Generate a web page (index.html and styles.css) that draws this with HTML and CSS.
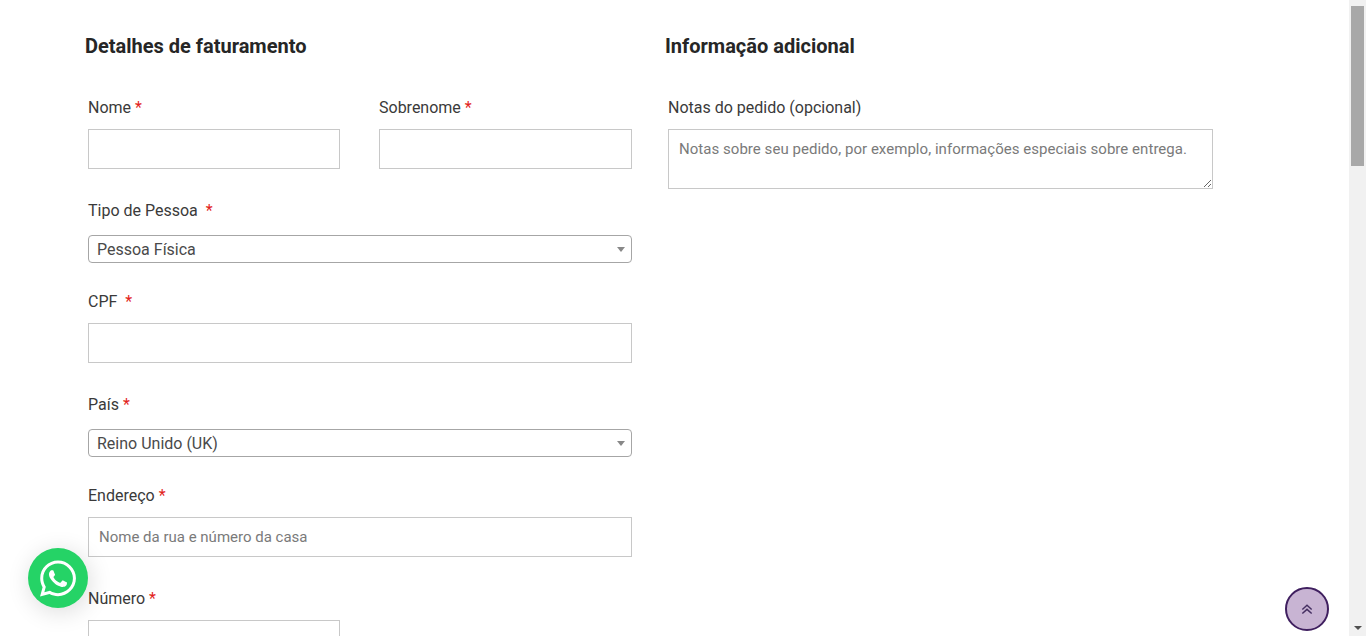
FILE: index.html
```html
<!DOCTYPE html>
<html lang="pt-BR">
<head>
<meta charset="utf-8">
<title>Finalizar compra</title>
<link rel="stylesheet" href="styles.css">
</head>
<body>
<div class="page">
  <main class="content">
    <section class="col col-billing">
      <h3 class="heading">Detalhes de faturamento</h3>
      <div class="fields">
        <div class="row-two">
          <div class="field">
            <label class="label">Nome <span class="req">*</span></label>
            <input class="input" type="text">
          </div>
          <div class="field">
            <label class="label">Sobrenome <span class="req">*</span></label>
            <input class="input" type="text">
          </div>
        </div>
        <div class="field field-sel">
          <label class="label">Tipo de Pessoa &nbsp;<span class="req">*</span></label>
          <div class="select"><span>Pessoa Física</span><i class="caret"></i></div>
        </div>
        <div class="field">
          <label class="label">CPF &nbsp;<span class="req">*</span></label>
          <input class="input" type="text">
        </div>
        <div class="field field-sel">
          <label class="label">País <span class="req">*</span></label>
          <div class="select"><span>Reino Unido (UK)</span><i class="caret"></i></div>
        </div>
        <div class="field">
          <label class="label">Endereço <span class="req">*</span></label>
          <input class="input" type="text" placeholder="Nome da rua e número da casa">
        </div>
        <div class="field field-half">
          <label class="label">Número <span class="req">*</span></label>
          <input class="input" type="text">
        </div>
      </div>
    </section>
    <section class="col col-extra">
      <h3 class="heading">Informação adicional</h3>
      <div class="fields">
        <div class="field">
          <label class="label">Notas do pedido (opcional)</label>
          <textarea class="textarea" placeholder="Notas sobre seu pedido, por exemplo, informações especiais sobre entrega."></textarea>
        </div>
      </div>
    </section>
  </main>
  <aside class="scrollbar">
    <div class="thumb"></div>
    <i class="arrow-down"></i>
  </aside>
</div>
<a class="whatsapp" href="#" aria-label="WhatsApp">
  <svg viewBox="0 0 448 512" width="36" height="41" aria-hidden="true"><path fill="#fff" d="M380.9 97.1C339 55.1 283.2 32 223.9 32c-122.4 0-222 99.6-222 222 0 39.1 10.2 77.3 29.6 111L0 480l117.7-30.9c32.4 17.7 68.9 27 106.1 27h.1c122.3 0 224.1-99.6 224.1-222 0-59.3-25.2-115-67.1-157zm-157 341.6c-33.2 0-65.7-8.9-94-25.7l-6.7-4-69.8 18.3L72 359.2l-4.4-7c-18.5-29.4-28.2-63.3-28.2-98.2 0-101.7 82.8-184.5 184.6-184.5 49.3 0 95.6 19.2 130.4 54.1 34.8 34.9 56.2 81.2 56.1 130.5 0 101.8-84.9 184.6-186.6 184.6zm101.2-138.2c-5.5-2.8-32.8-16.2-37.9-18-5.1-1.9-8.8-2.8-12.5 2.8-3.7 5.6-14.3 18-17.6 21.8-3.2 3.7-6.5 4.2-12 1.4-32.6-16.3-54-29.1-75.5-66-5.7-9.8 5.7-9.1 16.3-30.3 1.8-3.7.9-6.9-.5-9.7-1.4-2.8-12.5-30.1-17.1-41.2-4.5-10.8-9.1-9.3-12.5-9.5-3.2-.2-6.9-.2-10.6-.2-3.7 0-9.7 1.4-14.8 6.9-5.1 5.6-19.4 19-19.4 46.3 0 27.3 19.9 53.7 22.6 57.4 2.8 3.7 39.1 59.7 94.8 83.8 35.2 15.2 49 16.5 66.6 13.9 10.7-1.6 32.8-13.4 37.4-26.4 4.6-13 4.6-24.1 3.2-26.4-1.3-2.5-5-3.9-10.5-6.6z"/></svg>
</a>
<a class="to-top" href="#" aria-label="Voltar ao topo">
  <svg viewBox="0 0 12 12" width="14" height="14" aria-hidden="true"><path fill="none" stroke="#452f62" stroke-width="1.25" d="M2 6.4 6 2.8l4 3.6M2 9.9 6 6.3l4 3.6"/></svg>
</a>
</body>
</html>
```
FILE: styles.css
```css
* { box-sizing: border-box; }
html, body { margin: 0; height: 636px; overflow: hidden; background: #fff; }
body { font-family: Roboto, "Liberation Sans", sans-serif; color: #333; font-size: 16px; }
.page { display: flex; height: 636px; overflow: hidden; }
.content { flex: 1; display: flex; padding: 32px 0 0 85px; align-items: flex-start; }
.col-billing { width: 547px; margin-right: 33px; }
.col-extra { width: 548px; }
.heading { margin: 0 0 36px; font-size: 20px; line-height: 28px; font-weight: 700; color: #262626; }
.fields { padding-left: 3px; display: flex; flex-direction: column; }
.row-two { display: grid; grid-template-columns: 252px 253px; column-gap: 39px; }
.field { display: flex; flex-direction: column; margin-bottom: 30px; }
.field-sel { margin-bottom: 27px; }
.field-half { width: 252px; }
.label { font-size: 16px; line-height: 24px; margin-bottom: 9px; color: #3a3a3a; }
.field-sel .label { margin-bottom: 12px; }
.req { color: #e2231a; }
.input { display: block; width: 100%; height: 40px; padding: 0 10px; border: 1px solid #c8c8c8; border-radius: 0; background: #fff; font: 15px Roboto, sans-serif; color: #333; outline: 0; }
.input::placeholder, .textarea::placeholder { color: #7a7a7a; opacity: 1; }
.textarea { display: block; width: 545px; height: 60px; padding: 9px 10px; border: 1px solid #c8c8c8; font: 15px/20px Roboto, sans-serif; letter-spacing: .04px; outline: 0; resize: vertical; }
.select { display: flex; align-items: center; justify-content: space-between; height: 28px; padding: 0 6px 0 8px; border: 1px solid #a6a6a6; border-radius: 4px; background: #fff; font-size: 16px; color: #4a4a4a; }
.caret { width: 0; height: 0; border-left: 4px solid transparent; border-right: 4px solid transparent; border-top: 5px solid #888; }
.scrollbar { width: 17px; flex: none; background: #f1f1f1; padding: 6px 2px 0; position: relative; }
.thumb { height: 160px; background: #a8a8a8; }
.arrow-down { position: absolute; left: 5px; bottom: 6px; width: 0; height: 0; border-left: 4px solid transparent; border-right: 4px solid transparent; border-top: 4px solid #505050; }
.whatsapp { position: fixed; left: 28px; top: 548px; width: 60px; height: 60px; border-radius: 50%; background: #25d366; display: flex; align-items: center; justify-content: center; box-shadow: 2px 4px 24px rgba(0,0,0,.14); }
.to-top { position: fixed; left: 1285px; top: 587px; width: 44px; height: 44px; border-radius: 50%; background: #c8b4d3; border: 2px solid #3f1f5f; display: flex; align-items: center; justify-content: center; }
```
